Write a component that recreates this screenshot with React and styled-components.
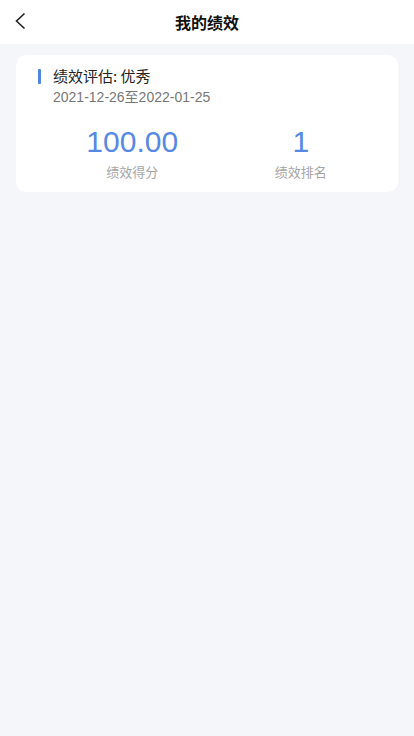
import React from 'react';
import styled, { createGlobalStyle } from 'styled-components';

const GlobalStyle = createGlobalStyle`
    html, body {
        margin: 0;
        padding: 0;
        background: #f5f6fa;
        font-family: "Noto Sans CJK SC", "Liberation Sans", sans-serif;
    }
`;

const Page = styled.div`
    min-height: 736px;
    background: #f5f6fa;
`;

const NavBar = styled.div`
    height: 44px;
    background: #fff;
    display: flex;
    align-items: center;
    justify-content: center;
    position: relative;
`;

const BackButton = styled.button`
    position: absolute;
    left: 8px;
    top: 7px;
    width: 24px;
    height: 28px;
    padding: 0;
    border: none;
    background: transparent;
    display: flex;
    align-items: center;
    justify-content: center;
`;

const Title = styled.h1`
    margin: 0;
    font-size: 16px;
    font-weight: bold;
    color: #111;
`;

const Content = styled.div`
    padding: 11px 16px;
`;

const Card = styled.div`
    background: #fff;
    border-radius: 10px;
    padding: 10px 13px 10px 22px;
`;

const CardHead = styled.div`
    display: flex;
    align-items: center;
    gap: 12px;
`;

const Bar = styled.span`
    width: 3px;
    height: 15px;
    background: #4f86e0;
    border-radius: 1px;
`;

const HeadTitle = styled.div`
    font-size: 15px;
    color: #222;
    line-height: 22px;
`;

const DateRange = styled.div`
    margin-left: 15px;
    font-family: "Liberation Sans", "Noto Sans CJK SC", sans-serif;
    font-size: 14px;
    color: #777;
    line-height: 20px;
`;

const Stats = styled.div`
    display: flex;
    padding-left: 10px;
    margin-top: 17px;
`;

const Stat = styled.div`
    flex: 1;
    display: flex;
    flex-direction: column;
    align-items: center;
`;

const Value = styled.div`
    font-family: "Liberation Sans", sans-serif;
    font-size: 30px;
    color: #5689e3;
    line-height: 36px;
`;

const Label = styled.div`
    font-size: 13px;
    color: #a5a5a5;
    line-height: 20px;
    margin-top: 2px;
`;

const stats = [
    { value: '100.00', label: '绩效得分' },
    { value: '1', label: '绩效排名' },
];

const App = () => {
    return (
        <Page>
            <GlobalStyle />
            <NavBar>
                <BackButton>
                    <svg width="12" height="18" viewBox="0 0 12 18">
                        <path d="M10.5 1.5 L2.5 9 L10.5 16.5" fill="none" stroke="#222" strokeWidth="1.6" />
                    </svg>
                </BackButton>
                <Title>我的绩效</Title>
            </NavBar>
            <Content>
                <Card>
                    <CardHead>
                        <Bar />
                        <HeadTitle>绩效评估: 优秀</HeadTitle>
                    </CardHead>
                    <DateRange>2021-12-26至2022-01-25</DateRange>
                    <Stats>
                        {stats.map((s) => (
                            <Stat key={s.label}>
                                <Value>{s.value}</Value>
                                <Label>{s.label}</Label>
                            </Stat>
                        ))}
                    </Stats>
                </Card>
            </Content>
        </Page>
    );
};

export default App;
